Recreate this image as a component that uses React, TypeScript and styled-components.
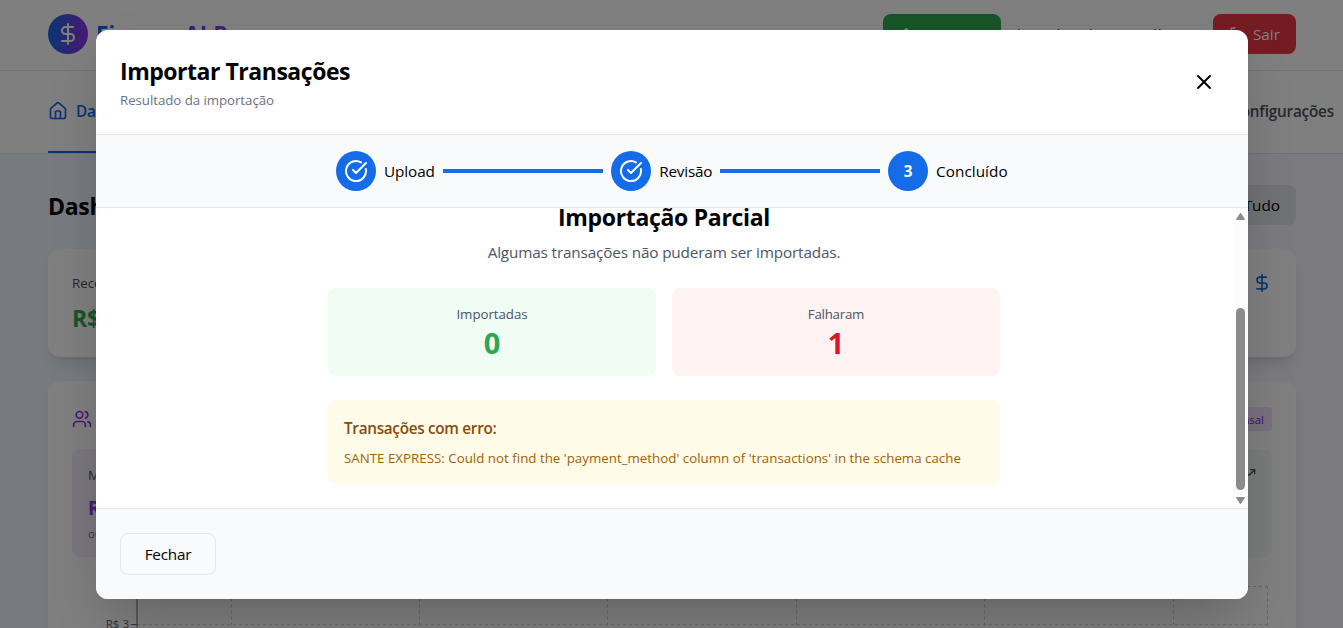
import React from 'react';
import styled, { createGlobalStyle } from 'styled-components';
import { CircleCheckBig, DollarSign, House, LogOut, TrendingUp, Upload, Users, X } from 'lucide-react';

const GlobalStyle = createGlobalStyle`
  * { box-sizing: border-box; }
  body { margin: 0; overflow: hidden; }
  h1, h2, h3, p { margin: 0; }
  button { font: inherit; color: inherit; border: 0; background: none; padding: 0; }
`;

const Screen = styled.div`
  position: relative;
  width: 100%;
  height: 628px;
  overflow: hidden;
  font-family: 'Open Sans', 'Noto Sans', sans-serif;
  color: #000;
  background: linear-gradient(to right, #eff6ff, #f7f5ff);
`;

const Text = styled.span<{ $size: number; $line: number; $weight?: number; $color?: string; $track?: number; $top?: number }>`
  display: block;
  white-space: nowrap;
  font-size: ${(p) => p.$size}px;
  line-height: ${(p) => p.$line}px;
  font-weight: ${(p) => p.$weight ?? 400};
  color: ${(p) => p.$color ?? 'inherit'};
  letter-spacing: ${(p) => p.$track ?? 0}px;
  && { margin-top: ${(p) => p.$top ?? 0}px; }
`;

const Heading = styled(Text)`
  padding-top: 2px;
  line-height: 30px;
`;

const TopBar = styled.header`
  display: flex;
  align-items: center;
  justify-content: space-between;
  height: 71px;
  padding: 0 47px 2px 48px;
  background: #fff;
  border-bottom: 1px solid #e5e7eb;
`;

const Brand = styled.div`
  display: flex;
  align-items: center;
  gap: 8px;
`;

const BrandMark = styled.div`
  display: grid;
  place-items: center;
  width: 40px;
  height: 40px;
  border-radius: 50%;
  color: #fff;
  background: linear-gradient(to right, #1469e6, #9333ea);
`;

const BrandName = styled(Text)`
  color: transparent;
  background: linear-gradient(to right, #1469e6, #9333ea);
  background-clip: text;
`;

const UserArea = styled.div`
  display: flex;
  align-items: center;
  gap: 16px;
`;

const UserName = styled(Text)`
  width: 180px;
`;

const BarButton = styled.button<{ $bg: string; $width: number }>`
  display: flex;
  align-items: center;
  gap: 8px;
  width: ${(p) => p.$width}px;
  height: 40px;
  padding: 0 16px;
  border-radius: 8px;
  color: #fff;
  background: ${(p) => p.$bg};
`;

const Nav = styled.nav`
  display: flex;
  justify-content: space-between;
  height: 83px;
  padding: 0 9px 0 48px;
  background: #fff;
  border-bottom: 1px solid #e5e7eb;
`;

const NavItem = styled.div<{ $active?: boolean }>`
  display: flex;
  align-items: center;
  gap: 8px;
  height: 82px;
  color: ${(p) => (p.$active ? '#1469e6' : '#4b5563')};
  border-bottom: 2px solid ${(p) => (p.$active ? '#1469e6' : 'transparent')};
`;

const Main = styled.main`
  display: flex;
  flex-direction: column;
  gap: 24px;
  padding: 31px 47px 0 48px;
`;

const Row = styled.div<{ $align?: string }>`
  display: flex;
  justify-content: space-between;
  align-items: ${(p) => p.$align ?? 'center'};
`;

const FilterButton = styled.button`
  display: flex;
  align-items: center;
  justify-content: flex-end;
  width: 68px;
  height: 40px;
  padding-right: 16px;
  border-radius: 8px;
  background: #e2e4e8;
`;

const StatGrid = styled.div`
  display: grid;
  grid-template-columns: repeat(4, 1fr);
  gap: 24px;
`;

const Card = styled.section`
  padding: 24px;
  border-radius: 12px;
  background: #fff;
  box-shadow: 0 10px 15px -3px rgb(0 0 0 / 0.1), 0 4px 6px -4px rgb(0 0 0 / 0.1);
`;

const StatCard = styled(Card)`
  height: 108px;
`;

const SharedCard = styled(Card)`
  height: 400px;
  padding-top: 26px;
`;

const Badge = styled.div`
  height: 24px;
  padding: 5px 8px 3px;
  border-radius: 4px;
  background: #f3e0ff;
`;

const MemberGrid = styled.div`
  display: grid;
  grid-template-columns: repeat(3, 1fr);
  gap: 16px;
  margin-top: 18px;
`;

const MemberBox = styled.div<{ $bg: string }>`
  height: 108px;
  padding: 16px;
  border-radius: 8px;
  background: ${(p) => p.$bg};
`;

const Chart = styled.svg`
  display: block;
  width: 1200px;
  height: 200px;
  margin-top: 19px;
`;

const Backdrop = styled.div`
  position: absolute;
  inset: 0;
  display: flex;
  justify-content: center;
  align-items: flex-start;
  padding: 30px 95px 0 96px;
  background: rgb(0 0 0 / 0.5);
`;

const Modal = styled.div`
  display: flex;
  flex-direction: column;
  width: 1152px;
  height: 569px;
  overflow: hidden;
  border-radius: 12px;
  background: #fff;
  box-shadow: 0 25px 50px -12px rgb(0 0 0 / 0.25);
`;

const ModalHeader = styled.div`
  display: flex;
  justify-content: space-between;
  align-items: center;
  height: 105px;
  padding: 24px;
  border-bottom: 1px solid #e5e7eb;
`;

const TitleBlock = styled.div`
  display: flex;
  flex-direction: column;
  gap: 4px;
`;

const CloseButton = styled.button`
  display: grid;
  place-items: center;
  width: 40px;
  height: 40px;
`;

const StepsBar = styled.div`
  display: flex;
  justify-content: center;
  height: 73px;
  padding: 16px 0;
  background: #f9fafc;
  border-bottom: 1px solid #e5e7eb;
`;

const Steps = styled.div`
  display: flex;
  align-items: center;
  gap: 8px;
  width: 672px;
`;

const StepDot = styled.div`
  display: grid;
  place-items: center;
  flex: none;
  width: 40px;
  height: 40px;
  border-radius: 50%;
  color: #fff;
  background: #146ce8;
`;

const StepLabel = styled(Text)<{ $width: number }>`
  flex: none;
  width: ${(p) => p.$width}px;
`;

const StepLine = styled.div`
  flex: 1;
  height: 4px;
  background: #146ce8;
`;

const ScrollArea = styled.div`
  display: flex;
  height: 300px;
  overflow: hidden;
`;

const Result = styled.div`
  display: flex;
  flex: 1;
  flex-direction: column;
  justify-content: flex-end;
  align-items: center;
  gap: 24px;
  padding: 0 1px 24px 0;
`;

const ResultHeading = styled.div`
  display: flex;
  flex-direction: column;
  align-items: center;
  gap: 8px;
`;

const CountGrid = styled.div`
  display: grid;
  grid-template-columns: 1fr 1fr;
  gap: 16px;
  width: 672px;
`;

const CountCard = styled.div<{ $bg: string }>`
  display: flex;
  flex-direction: column;
  align-items: center;
  height: 88px;
  padding: 16px 16px 0;
  border-radius: 8px;
  background: ${(p) => p.$bg};
`;

const ErrorBox = styled.div`
  display: flex;
  flex-direction: column;
  gap: 8px;
  width: 672px;
  padding: 16px;
  border-radius: 8px;
  background: #fefbe8;
`;

const ScrollTrack = styled.div`
  display: flex;
  flex-direction: column;
  align-items: flex-start;
  width: 15px;
  padding: 5px 0 4px 3px;
  background: #fcfcfc;
`;

const ScrollThumb = styled.div`
  width: 9px;
  height: 182px;
  margin: 88px 0 7px;
  border-radius: 5px;
  background: #8b8b8b;
`;

const ModalFooter = styled.div`
  height: 91px;
  padding: 24px;
  background: #f9fafc;
  border-top: 1px solid #e5e7eb;
`;

const OutlineButton = styled.button`
  display: grid;
  place-items: center;
  width: 96px;
  height: 42px;
  border: 1px solid #e5e7eb;
  border-radius: 8px;
`;

const ScrollArrow = ({ down }: { down?: boolean }) => (
  <svg width="9" height="7" viewBox="0 0 10 7" preserveAspectRatio="none" fill="#8b8b8b">
    <path d={down ? 'M1 0h8q1.4 0 .6 1.2L6 6.3q-1 1.2-2 0L.4 1.2Q-.4 0 1 0z' : 'M1 7h8q1.4 0 .6-1.2L6 .7q-1-1.2-2 0L.4 5.8Q-.4 7 1 7z'} />
  </svg>
);

const gridLines = [111, 299, 487, 676, 864, 1053, 1147];

const Dashboard = () => (
  <>
    <TopBar>
      <Brand>
        <BrandMark><DollarSign size={24} /></BrandMark>
        <BrandName $size={23} $line={32} $weight={700} $track={-0.15}>FinanceAI Pro</BrandName>
      </Brand>
      <UserArea>
        <BarButton $bg="#2fa84f" $width={118}>
          <Upload size={16} />
          <Text $size={15.3} $line={24}>Importar</Text>
        </BarButton>
        <UserName $size={15.3} $line={24} $color="#374151" $track={0.9}>leandro de Carvalho</UserName>
        <BarButton $bg="#ea3845" $width={83}>
          <LogOut size={16} />
          <Text $size={15.3} $line={24}>Sair</Text>
        </BarButton>
      </UserArea>
    </TopBar>
    <Nav>
      <NavItem $active>
        <House size={20} />
        <Text $size={15.3} $line={24} $weight={600} $track={-0.3}>Dashboard</Text>
      </NavItem>
      <NavItem>
        <Text $size={15.3} $line={24} $weight={600} $track={-0.2}>Configurações</Text>
      </NavItem>
    </Nav>
    <Main>
      <Row>
        <Heading as="h2" $size={23} $line={32} $weight={700} $track={-0.3}>Dashboard</Heading>
        <FilterButton><Text $size={15.3} $line={24}>Tudo</Text></FilterButton>
      </Row>
      <StatGrid>
        <StatCard>
          <Text $size={13.3} $line={20} $color="#4b5563">Receitas</Text>
          <Text $size={23} $line={32} $top={9} $weight={700} $color="#2fa84f" $track={-0.3}>R$ 0,00</Text>
        </StatCard>
        <StatCard />
        <StatCard />
        <StatCard>
          <Row $align="flex-start">
            <span />
            <DollarSign size={20} color="#1469e6" />
          </Row>
        </StatCard>
      </StatGrid>
      <SharedCard>
        <Row>
          <Users size={20} color="#9333ea" />
          <Badge><Text $size={11.4} $line={16} $color="#7e22ce">Visão Mensal</Text></Badge>
        </Row>
        <MemberGrid>
          <MemberBox $bg="#f6effd">
            <Text $size={13.3} $line={20} $color="#4b5563">Meu</Text>
            <Text $size={19} $line={28} $top={9} $weight={700} $color="#9333ea">R$ 0,00</Text>
            <Text $size={11.4} $line={16} $top={4} $color="#6b7280">outubro</Text>
          </MemberBox>
          <MemberBox $bg="#f3f6fb" />
          <MemberBox $bg="#f4f9f7">
            <Row $align="flex-start">
              <span />
              <TrendingUp size={16} color="#4b5563" />
            </Row>
          </MemberBox>
        </MemberGrid>
        <Chart viewBox="0 0 1200 200">
          <g stroke="#ccc" strokeDasharray="3 3">
            {gridLines.map((x) => <line key={x} x1={x + 48.5} x2={x + 48.5} y1="10.5" y2="200" />)}
            <line x1="65" x2="1195.5" y1="10.5" y2="10.5" />
            <line x1="65" x2="1195.5" y1="48.5" y2="48.5" />
          </g>
          <path d="M65 10v190M59 48.5h6" stroke="#666" />
          <text x="57" y="52" textAnchor="end" fontSize="11.5" fill="#666">R$ 3</text>
        </Chart>
      </SharedCard>
    </Main>
  </>
);

const App = () => (
  <Screen>
    <GlobalStyle />
    <Dashboard />
    <Backdrop>
      <Modal>
        <ModalHeader>
          <TitleBlock>
            <Heading as="h2" $size={23} $line={32} $weight={700} $track={-0.47}>Importar Transações</Heading>
            <Text as="p" $size={13.3} $line={20} $color="#6b7280" $track={-0.06}>Resultado da importação</Text>
          </TitleBlock>
          <CloseButton aria-label="Fechar"><X size={24} /></CloseButton>
        </ModalHeader>
        <StepsBar>
          <Steps>
            <StepDot><CircleCheckBig size={24} /></StepDot>
            <StepLabel $width={51.3} $size={15.3} $line={24} $track={-0.1}>Upload</StepLabel>
            <StepLine />
            <StepDot><CircleCheckBig size={24} /></StepDot>
            <StepLabel $width={53} $size={15.3} $line={24} $track={-0.2}>Revisão</StepLabel>
            <StepLine />
            <StepDot><Text $size={15.3} $line={24} $weight={700}>3</Text></StepDot>
            <StepLabel $width={72} $size={15.3} $line={24} $track={0.05}>Concluído</StepLabel>
          </Steps>
        </StepsBar>
        <ScrollArea>
          <Result>
            <ResultHeading>
              <Heading as="h3" $size={23} $line={32} $weight={700} $track={-0.32}>Importação Parcial</Heading>
              <Text as="p" $size={15.3} $line={24} $color="#4b5563" $track={-0.15}>Algumas transações não puderam ser importadas.</Text>
            </ResultHeading>
            <CountGrid>
              <CountCard $bg="#f0fcf4">
                <Text $size={13.3} $line={20} $color="#4b5563" $track={-0.05}>Importadas</Text>
                <Text $size={29} $line={36} $top={1} $weight={700} $color="#2fa551">0</Text>
              </CountCard>
              <CountCard $bg="#fef2f2">
                <Text $size={13.3} $line={20} $color="#4b5563" $track={-0.25}>Falharam</Text>
                <Text $size={29} $line={36} $top={1} $weight={700} $color="#dc142c">1</Text>
              </CountCard>
            </CountGrid>
            <ErrorBox>
              <Text as="h3" $size={15.3} $line={24} $weight={600} $color="#854d0e" $track={-0.3}>Transações com erro:</Text>
              <Text as="p" $size={13.3} $line={20} $color="#a16207" $track={0.015}>
                SANTE EXPRESS: Could not find the 'payment_method' column of 'transactions' in the schema cache
              </Text>
            </ErrorBox>
          </Result>
          <ScrollTrack>
            <ScrollArrow />
            <ScrollThumb />
            <ScrollArrow down />
          </ScrollTrack>
        </ScrollArea>
        <ModalFooter>
          <OutlineButton><Text $size={15.3} $line={24} $track={-0.2}>Fechar</Text></OutlineButton>
        </ModalFooter>
      </Modal>
    </Backdrop>
  </Screen>
);

export default App;
